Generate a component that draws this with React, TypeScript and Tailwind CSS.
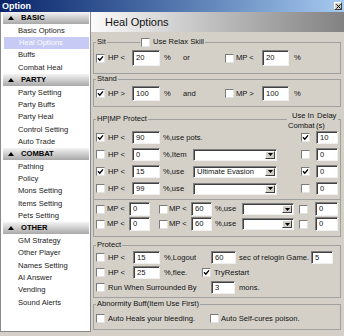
import React from "react";

type NavRow = { label: string; head?: boolean; active?: boolean };

const nav: NavRow[] = [
  { label: "BASIC", head: true },
  { label: "Basic Options" },
  { label: "Heal Options", active: true },
  { label: "Buffs" },
  { label: "Combat Heal" },
  { label: "PARTY", head: true },
  { label: "Party Setting" },
  { label: "Party Buffs" },
  { label: "Party Heal" },
  { label: "Control Setting" },
  { label: "Auto Trade" },
  { label: "COMBAT", head: true },
  { label: "Pathing" },
  { label: "Policy" },
  { label: "Mons Setting" },
  { label: "Items Setting" },
  { label: "Pets Setting" },
  { label: "OTHER", head: true },
  { label: "GM Strategy" },
  { label: "Other Player" },
  { label: "Names Setting" },
  { label: "AI Answer" },
  { label: "Vending" },
  { label: "Sound Alerts" },
];

function Check({ on = false, className = "" }: { on?: boolean; className?: string }) {
  return (
    <span
      className={`flex h-[9px] w-[9px] shrink-0 items-center justify-center border border-[#7b7b7b] border-r-[#e2e2e2] border-b-[#e2e2e2] bg-white ${className}`}
    >
      {on && (
        <svg viewBox="0 0 7 7" className="h-[7px] w-[7px]">
          <path d="M1 3.3 L2.8 5.2 L6 1.4" stroke="#000" strokeWidth="1.4" fill="none" />
        </svg>
      )}
    </span>
  );
}

function Field({ v, className = "" }: { v: string; className?: string }) {
  return (
    <span
      className={`flex shrink-0 items-center border border-[#808080] border-r-[#f0f0f0] border-b-[#f0f0f0] bg-white pl-[3px] shadow-[inset_1px_1px_0_#404040] ${className}`}
    >
      {v}
    </span>
  );
}

function Drop({ v = "", className = "" }: { v?: string; className?: string }) {
  return (
    <span
      className={`flex shrink-0 items-center border border-[#808080] border-r-[#f0f0f0] border-b-[#f0f0f0] bg-white shadow-[inset_1px_1px_0_#404040] ${className}`}
    >
      <span className="flex-1 truncate pl-[3px]">{v}</span>
      <span className="mr-[1px] flex h-[calc(100%-2px)] w-[10px] items-center justify-center border border-white border-r-[#404040] border-b-[#404040] bg-[#d4d0c8]">
        <svg viewBox="0 0 5 3" className="h-[3px] w-[5px]">
          <path d="M0 0h5L2.5 3z" fill="#000" />
        </svg>
      </span>
    </span>
  );
}

function HpRow({
  pct,
  text,
  drop,
  combat,
  on = false,
}: {
  pct: string;
  text: string;
  drop?: string;
  combat: boolean;
  on?: boolean;
}) {
  return (
    <div className="flex h-[13px] items-center pl-[2px]">
      <Check on={on} />
      <span className="ml-[3px] w-[24px]">HP &lt;</span>
      <Field v={pct} className="h-[13px] w-[28px]" />
      {drop === undefined ? (
        <span className="ml-[3px] w-[138px]">{text}</span>
      ) : (
        <>
          <span className="ml-[3px] w-[30px]">{text}</span>
          <Drop v={drop} className="h-[12px] w-[84px]" />
          <span className="w-[24px]" />
        </>
      )}
      <Check on={combat} />
      <Field v={drop === undefined && combat ? "10" : "0"} className="ml-[6px] h-[13px] w-[22px]" />
    </div>
  );
}

function MpRow() {
  return (
    <div className="flex h-[14px] items-center pl-[2px]">
      <Check />
      <span className="ml-[2px] w-[22px]">MP &lt;</span>
      <Field v="0" className="h-[14px] w-[21px]" />
      <Check className="ml-[9px]" />
      <span className="ml-[1px] w-[22px]">MP &lt;</span>
      <Field v="60" className="h-[14px] w-[21px]" />
      <span className="ml-[3px] w-[27px]">%,use</span>
      <Drop className="h-[12px] w-[52px]" />
      <Check className="ml-[5px]" />
      <Field v="0" className="ml-[7px] h-[14px] w-[23px]" />
    </div>
  );
}

export default function App() {
  return (
    <div className="flex h-[336px] w-[344px] flex-col bg-[#d4d0c8] font-['Liberation_Sans',Arial,sans-serif] text-[7.6px] leading-none text-[#111]">
      {/* title bar */}
      <div className="flex h-[12px] items-center justify-between bg-linear-to-r from-[#0a246a] to-[#a6caf0] pl-[2px] pr-[2px]">
        <span className="text-[9px] font-bold text-white">Option</span>
        <span className="flex h-[8px] w-[8px] items-center justify-center border border-white border-r-[#404040] border-b-[#404040] bg-[#d4d0c8]">
          <svg viewBox="0 0 6 6" className="h-[5px] w-[5px]">
            <path d="M0.5 0.5 L5.5 5.5 M5.5 0.5 L0.5 5.5" stroke="#000" strokeWidth="1.2" />
          </svg>
        </span>
      </div>

      <div className="flex h-[320px]">
        {/* left nav */}
        <div className="flex w-[91px] flex-col border-r border-l border-b border-[#8a8a8a] bg-white pr-[1px] pl-[2px]">
          {nav.map((r) =>
            r.head ? (
              <div
                key={r.label}
                className="flex h-[12.37px] items-center bg-linear-to-b from-[#f4f4f4] to-[#a9a9a9] pl-[5px] font-bold text-black"
              >
                <svg viewBox="0 0 6 4" className="mr-[7px] h-[4px] w-[6px]">
                  <path d="M0 4h6L3 0z" fill="#000" />
                </svg>
                {r.label}
              </div>
            ) : (
              <div
                key={r.label}
                className={`flex h-[12.37px] items-center pl-[15px] ${r.active ? "ml-[1px] bg-[#c6caf4] pl-[14px] text-white" : "text-[#222]"}`}
              >
                {r.label}
              </div>
            )
          )}
        </div>

        {/* main */}
        <div className="flex flex-1 flex-col">
          <div className="flex h-[20px] items-center bg-linear-to-r from-[#fbfbfb] to-[#828282] pl-[14px] text-[11px] text-[#111]">
            Heal Options
          </div>

          <div className="relative mt-[5px] mr-[3px] ml-[2px]">
            <fieldset className="h-[37px] border border-[#a0a0a0]">
              <legend className="ml-[2px] px-[1px] leading-[10px]">Sit</legend>
              <div className="mt-[3px] flex h-[16px] items-center pl-[2px]">
                <Check on />
                <span className="ml-[3px] w-[24px]">HP &lt;</span>
                <Field v="20" className="h-[16px] w-[28px]" />
                <span className="ml-[4px] w-[19px]">%</span>
                <span className="w-[42px]">or</span>
                <Check />
                <span className="ml-[2px] w-[26px]">MP &lt;</span>
                <Field v="20" className="h-[16px] w-[27px]" />
                <span className="ml-[5px]">%</span>
              </div>
            </fieldset>
            <div className="absolute top-0 left-[47px] flex h-[10px] items-center bg-[#d4d0c8] px-[1px]">
              <Check />
              <span className="ml-[3px]">Use Relax Skill</span>
            </div>
          </div>

          <fieldset className="mr-[3px] ml-[2px] h-[33px] border border-[#a0a0a0]">
            <legend className="ml-[2px] px-[1px] leading-[10px]">Stand</legend>
            <div className="mt-[2px] flex h-[15px] items-center pl-[2px]">
              <Check on />
              <span className="ml-[3px] w-[24px]">HP &gt;</span>
              <Field v="100" className="h-[15px] w-[28px]" />
              <span className="ml-[4px] w-[19px]">%</span>
              <span className="w-[42px]">and</span>
              <Check />
              <span className="ml-[2px] w-[26px]">MP &gt;</span>
              <Field v="100" className="h-[15px] w-[27px]" />
              <span className="ml-[5px]">%</span>
            </div>
          </fieldset>

          <div className="relative mt-[7px] mr-[3px] ml-[2px]">
            <fieldset className="h-[86px] border border-[#a0a0a0]">
              <legend className="ml-[2px] px-[1px] leading-[10px]">HP|MP Protect</legend>
              <div className="mt-[7px] flex flex-col gap-[4px]">
                <HpRow on pct="90" text="%,use pots." combat />
                <HpRow pct="0" text="%,Item" drop="" combat={false} />
                <HpRow on pct="15" text="%,use" drop="Ultimate Evasion" combat />
                <HpRow pct="99" text="%,use" drop="" combat={false} />
              </div>
            </fieldset>
            <div className="absolute top-[-3px] left-[194px] flex flex-col bg-[#d4d0c8] px-[1px] leading-[9.5px]">
              <span className="pl-[4px]">Use In</span>
              <span>Combat</span>
            </div>
            <div className="absolute top-[-3px] left-[222px] flex flex-col bg-[#d4d0c8] pr-[2px] pl-[1px] leading-[9.5px]">
              <span className="pl-[1px]">Delay</span>
              <span>(s)</span>
            </div>
          </div>

          <div className="mr-[3px] ml-[2px] flex h-[37px] flex-col gap-[1px] border-r border-b border-l border-[#a0a0a0] pt-[2px]">
            <MpRow />
            <MpRow />
          </div>

          <fieldset className="mt-[3px] mr-[3px] ml-[2px] h-[58px] border border-[#a0a0a0]">
            <legend className="ml-[2px] px-[1px] leading-[10px]">Protect</legend>
            <div className="mt-[1px] flex flex-col gap-[2px]">
              <div className="flex h-[13px] items-center pl-[2px]">
                <Check />
                <span className="ml-[3px] w-[25px]">HP &lt;</span>
                <Field v="15" className="h-[13px] w-[27px]" />
                <span className="ml-[4px] w-[47px]">%,Logout</span>
                <Field v="60" className="h-[13px] w-[25px]" />
                <span className="ml-[3px] w-[72px]">sec of relogin Game.</span>
                <Field v="5" className="h-[13px] w-[22px]" />
              </div>
              <div className="flex h-[13px] items-center pl-[2px]">
                <Check />
                <span className="ml-[3px] w-[25px]">HP &lt;</span>
                <Field v="25" className="h-[13px] w-[27px]" />
                <span className="ml-[4px] w-[38px]">%,flee.</span>
                <Check on />
                <span className="ml-[3px]">TryRestart</span>
              </div>
              <div className="flex h-[13px] items-center pl-[2px]">
                <Check />
                <span className="ml-[3px] w-[103px]">Run When Surrounded By</span>
                <Field v="3" className="h-[13px] w-[24px]" />
                <span className="ml-[4px]">mons.</span>
              </div>
            </div>
          </fieldset>

          <fieldset className="mt-[1px] mr-[3px] ml-[2px] h-[31px] border border-[#a0a0a0]">
            <legend className="ml-[2px] px-[1px] leading-[10px]">Abnormity Buff(Item Use First)</legend>
            <div className="mt-[3px] flex h-[13px] items-center pl-[2px]">
              <Check />
              <span className="ml-[3px] w-[102px]">Auto Heals your bleeding.</span>
              <Check />
              <span className="ml-[2px]">Auto Self-cures poison.</span>
            </div>
          </fieldset>
        </div>
      </div>
    </div>
  );
}
